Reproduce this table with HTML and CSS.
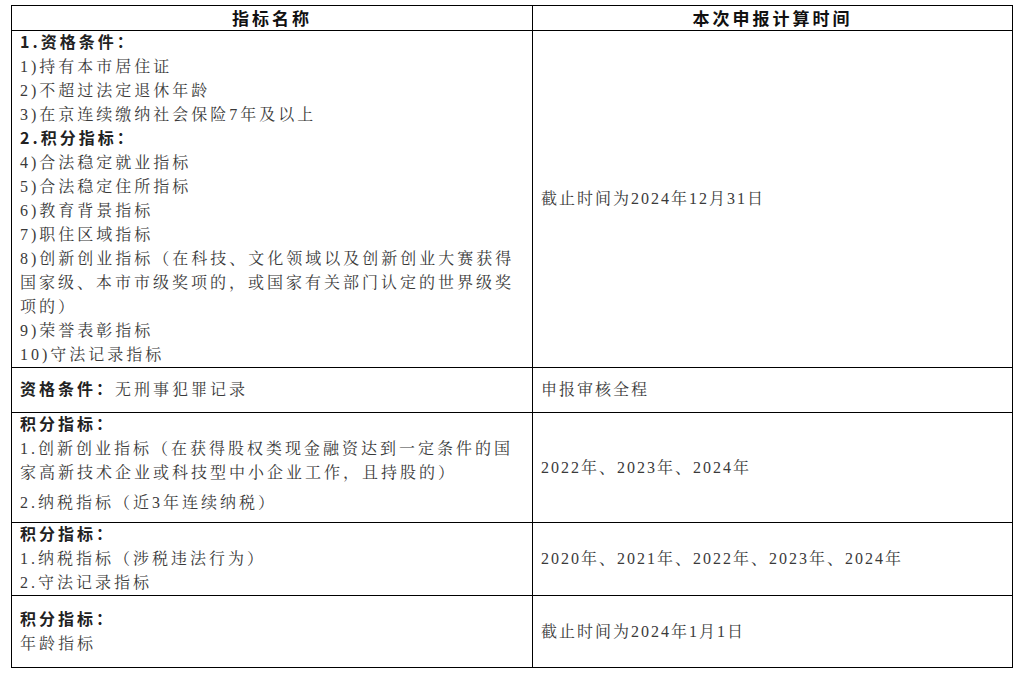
FILE: index.html
```html
<!DOCTYPE html>
<html lang="zh-CN">
<head>
<meta charset="utf-8">
<title>指标名称与申报计算时间</title>
<link rel="stylesheet" href="styles.css">
</head>
<body>
<div class="page">
<table class="grid">
  <colgroup>
    <col class="col-name">
    <col class="col-time">
  </colgroup>
  <thead>
    <tr class="head">
      <th>指标名称</th>
      <th>本次申报计算时间</th>
    </tr>
  </thead>
  <tbody>
    <tr class="r1">
      <td class="name">
        <p><b>1.资格条件：</b></p>
        <p>1)持有本市居住证</p>
        <p>2)不超过法定退休年龄</p>
        <p>3)在京连续缴纳社会保险7年及以上</p>
        <p><b>2.积分指标：</b></p>
        <p>4)合法稳定就业指标</p>
        <p>5)合法稳定住所指标</p>
        <p>6)教育背景指标</p>
        <p>7)职住区域指标</p>
        <p>8)创新创业指标（在科技、文化领域以及创新创业大赛获得<br>国家级、本市市级奖项的，或国家有关部门认定的世界级奖<br>项的）</p>
        <p>9)荣誉表彰指标</p>
        <p>10)守法记录指标</p>
      </td>
      <td class="time">截止时间为2024年12月31日</td>
    </tr>
    <tr class="r2">
      <td class="name"><p><b>资格条件：</b>无刑事犯罪记录</p></td>
      <td class="time">申报审核全程</td>
    </tr>
    <tr class="r3">
      <td class="name">
        <p><b>积分指标：</b></p>
        <p>1.创新创业指标（在获得股权类现金融资达到一定条件的国<br>家高新技术企业或科技型中小企业工作，且持股的）</p>
        <p class="gap">2.纳税指标（近3年连续纳税）</p>
      </td>
      <td class="time">2022年、2023年、2024年</td>
    </tr>
    <tr class="r4">
      <td class="name">
        <p><b>积分指标：</b></p>
        <p>1.纳税指标（涉税违法行为）</p>
        <p>2.守法记录指标</p>
      </td>
      <td class="time">2020年、2021年、2022年、2023年、2024年</td>
    </tr>
    <tr class="r5">
      <td class="name">
        <p><b>积分指标：</b></p>
        <p>年龄指标</p>
      </td>
      <td class="time">截止时间为2024年1月1日</td>
    </tr>
  </tbody>
</table>
</div>
</body>
</html>
```

FILE: styles.css
```css
html, body {
  margin: 0;
  padding: 0;
  background: #ffffff;
}

.page {
  padding: 5px 0 0 11px;
}

.grid {
  border-collapse: collapse;
  width: 1001px;
  table-layout: fixed;
  font-family: "Liberation Serif", "Noto Serif CJK SC", "Noto Sans CJK SC", serif;
  font-size: 16px;
  line-height: 24px;
  color: #3a3a3a;
}

.col-name { width: 521px; }
.col-time { width: 480px; }

.grid th,
.grid td {
  border: 1px solid #000000;
  padding: 0;
}

.head th {
  height: 24px;
  padding: 0;
  font-family: "Noto Sans CJK SC", sans-serif;
  font-weight: 700;
  font-size: 17px;
  line-height: 24px;
  letter-spacing: 3px;
  color: #111111;
  text-align: center;
  vertical-align: middle;
}

.grid p {
  margin: 0;
}

.grid b {
  font-family: "Noto Sans CJK SC", sans-serif;
  font-weight: 700;
  color: #222222;
  letter-spacing: 3px;
  line-height: 16px;
}

td.name {
  padding-left: 8px;
  padding-right: 8px;
  vertical-align: top;
  letter-spacing: 3px;
}

td.time {
  padding-left: 8px;
  vertical-align: middle;
  letter-spacing: 2px;
}

.r1 td.name { padding-top: 0; padding-bottom: 0; }
.r2 td.name { padding-top: 10px; padding-bottom: 10px; }
.r3 td.name { padding-top: 0; padding-bottom: 7px; }
.r3 .gap { margin-top: 6px; }
.r4 td.name { padding-top: 0; padding-bottom: 0; }
.r5 td.name { padding-top: 12px; padding-bottom: 11px; }
```
